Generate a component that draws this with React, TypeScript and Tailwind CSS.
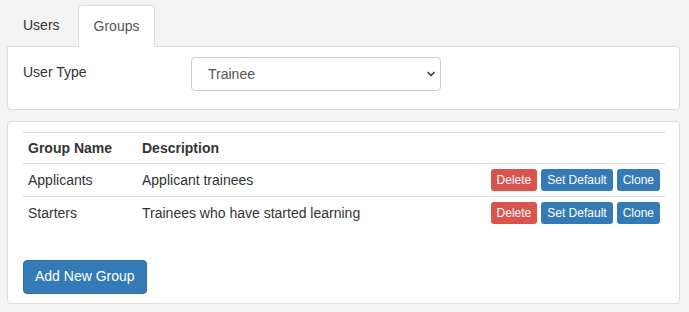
import { ChevronDown } from 'lucide-react'

const groups = [
  { name: 'Applicants', description: 'Applicant trainees' },
  { name: 'Starters', description: 'Trainees who have started learning' },
]

export default function App() {
  return (
    <div
      className="w-[689px] h-[312px] bg-[#f3f3f3] text-[#333] text-[14px] overflow-hidden"
      style={{ fontFamily: '"Liberation Sans", Arial, sans-serif' }}
    >
      {/* Tabs */}
      <div className="flex pt-[5px] pl-[8px] items-end">
        <div className="h-[41px] px-[15px] flex items-center text-[#333] mr-[3px]">Users</div>
        <div className="h-[42px] -mb-px px-[15px] flex items-center bg-white border border-[#ddd] border-b-white rounded-t-[4px] text-[#555] relative z-10">
          Groups
        </div>
      </div>

      {/* User type panel */}
      <div className="mx-[7px] w-[673px] h-[64px] bg-white border border-[#ddd] rounded-b-[4px] rounded-tr-[4px] flex items-start px-[15px] pt-[10px]">
        <label className="w-[168px] pt-[5px]">User Type</label>
        <div className="relative w-[250px] h-[34px]">
          <select
            className="appearance-none w-full h-full border border-[#ccc] rounded-[4px] pl-[16px] text-[#555] bg-white"
            defaultValue="Trainee"
          >
            <option>Trainee</option>
          </select>
          <ChevronDown className="absolute right-[4px] top-[11px] w-[12px] h-[12px] text-[#444]" strokeWidth={3.5} />
        </div>
      </div>

      {/* Groups panel */}
      <div className="mx-[7px] mt-[11px] w-[673px] h-[183px] bg-white border border-[#ddd] rounded-[4px] px-[15px] pt-[10px]">
        <table className="w-[642px] border-collapse">
          <thead>
            <tr className="border-t border-b border-[#ddd] h-[31px]">
              <th className="text-left font-bold pl-[5px] w-[119px]">Group Name</th>
              <th className="text-left font-bold">Description</th>
              <th></th>
            </tr>
          </thead>
          <tbody>
            {groups.map((g, i) => (
              <tr key={g.name} className={i === 0 ? 'border-b border-[#ddd] h-[33px]' : 'h-[33px]'}>
                <td className="pl-[5px]">{g.name}</td>
                <td>{g.description}</td>
                <td className="text-right pr-[5px]">
                  <div className="flex justify-end gap-[4px] text-[12px] text-white">
                    <button className="h-[22px] px-[6px] bg-[#d9534f] rounded-[3px]">Delete</button>
                    <button className="h-[22px] px-[6px] bg-[#337ab7] rounded-[3px]">Set Default</button>
                    <button className="h-[22px] px-[6px] bg-[#337ab7] rounded-[3px]">Clone</button>
                  </div>
                </td>
              </tr>
            ))}
          </tbody>
        </table>
        <button className="mt-[30px] h-[34px] px-[11px] bg-[#337ab7] text-white rounded-[4px] border border-[#2e6da4]">
          Add New Group
        </button>
      </div>
    </div>
  )
}
